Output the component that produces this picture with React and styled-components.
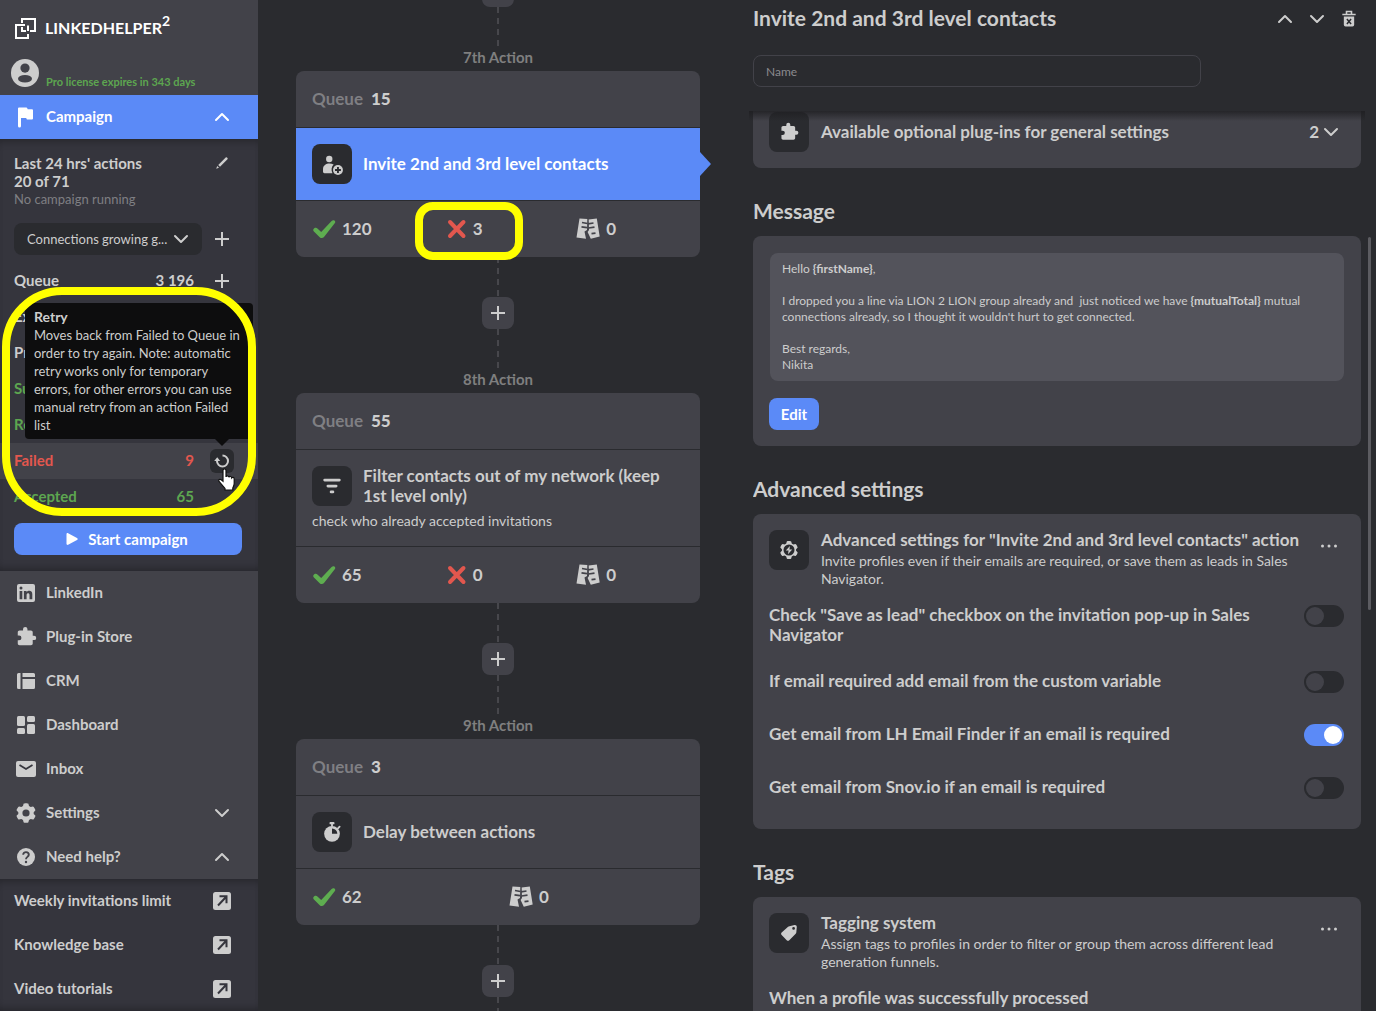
import React from 'react';
import styled, { createGlobalStyle, css } from 'styled-components';

const campaignRows = [
    { label: 'Excluded' },
    { label: 'Processed' },
    { label: 'Successful', tone: 'green' },
    { label: 'Replied', tone: 'green' },
    { label: 'Failed', value: '9', tone: 'red', retry: true },
    { label: 'Accepted', value: '65', tone: 'green' },
];

const helpLinks = ['Weekly invitations limit', 'Knowledge base', 'Video tutorials'];

const emailSettings = [
    { id: 'lead', label: 'Check "Save as lead" checkbox on the invitation pop-up in Sales Navigator' },
    { id: 'custom', label: 'If email required add email from the custom variable' },
    { id: 'finder', label: 'Get email from LH Email Finder if an email is required', on: true },
    { id: 'snov', label: 'Get email from Snov.io if an email is required' },
];

/* icons */

const Svg = ({ size = 24, children, ...rest }) => (
    <svg width={size} height={size} viewBox="0 0 24 24" fill="currentColor" aria-hidden="true" {...rest}>
        {children}
    </svg>
);

const Chevron = ({ up }) => (
    <Svg>
        <path d={up ? 'M6 15l6-6 6 6' : 'M6 9l6 6 6-6'} fill="none" stroke="currentColor" strokeWidth="2" strokeLinecap="round" strokeLinejoin="round" />
    </Svg>
);

const Plus = () => (
    <Svg>
        <path d="M12 5v14M5 12h14" fill="none" stroke="currentColor" strokeWidth="2" />
    </Svg>
);

const LogoIcon = () => (
    <Svg fill="none" stroke="currentColor" strokeWidth="2">
        <path d="M9 7V3h13v12h-5M9 11v4h4" />
        <path d="M12 9H3v13h12v-4M15 15V9.500" />
    </Svg>
);

const FlagIcon = () => (
    <Svg>
        <path d="M4 3.500a1 1 0 0 1 1-1h7.200c.6 0 1 .3 1.200.9l.3.800H18a1 1 0 0 1 1 1V13.600a1 1 0 0 1-1 1h-4.500a1 1 0 0 1-.9-.6l-.4-.900H7V21a1.500 1.500 0 0 1-3 0z" />
    </Svg>
);

const LinkedInIcon = () => (
    <Svg>
        <path fillRule="evenodd" d="M5 3h14a2 2 0 0 1 2 2v14a2 2 0 0 1-2 2H5a2 2 0 0 1-2-2V5a2 2 0 0 1 2-2zm.6 7v8.300h2.700V10zM7 5.600a1.500 1.500 0 1 0 0 3 1.500 1.500 0 0 0 0-3zM9.900 10v8.300h2.700v-4.500c0-2 2.900-2.200 2.900 0v4.500h2.800v-5.200c0-4-4.200-3.900-5.700-1.900V10z" />
    </Svg>
);

const PuzzleIcon = () => (
    <Svg>
        <path d="M20.500 11H19V7c0-1.100-.9-2-2-2h-4V3.500a2.500 2.500 0 0 0-5 0V5H4c-1.100 0-2 .9-2 2v3.800h1.500a2.700 2.700 0 0 1 0 5.400H2V20c0 1.100.9 2 2 2h13c1.100 0 2-.9 2-2v-4h1.500a2.500 2.500 0 0 0 0-5z" transform="translate(2 1) scale(.88)" />
    </Svg>
);

const CrmIcon = () => (
    <Svg>
        <path d="M4.500 4H6.500v16h-2A1.500 1.500 0 0 1 3 18.500v-13A1.500 1.500 0 0 1 4.500 4zM8.500 4h11A1.500 1.500 0 0 1 21 5.500V8H8.500zM8.500 10H21v8.500a1.500 1.500 0 0 1-1.500 1.500h-11z" />
    </Svg>
);

const DashboardIcon = () => (
    <Svg>
        <rect x="3" y="3" width="8" height="10" rx="1.500" />
        <rect x="13" y="3" width="8" height="6" rx="1.500" />
        <rect x="3" y="15" width="8" height="6" rx="1.500" />
        <rect x="13" y="11" width="8" height="10" rx="1.500" />
    </Svg>
);

const MailIcon = () => (
    <Svg>
        <rect x="2" y="4" width="20" height="16" rx="2" />
        <path d="M5.500 8l6.500 4 6.500-4" fill="none" stroke="#35353d" strokeWidth="1.800" />
    </Svg>
);

const gearPath = 'M9.600 2.800c.2-.8 4.600-.8 4.800 0l.6 2.200 1.700 1 2.200-.600c.8-.2 3 3.600 2.400 4.200L19.700 11.200v1.700l1.600 1.500c.6.6-1.600 4.400-2.400 4.200l-2.200-.6-1.700 1-.6 2.200c-.2.800-4.600.8-4.800 0L9 19l-1.700-1-2.200.6c-.8.200-3-3.600-2.400-4.200l1.600-1.500v-1.700L2.700 9.600C2.100 9 4.300 5.200 5.100 5.400l2.200.6L9 5z';

const GearIcon = () => (
    <Svg>
        <path d={gearPath} />
        <circle cx="12" cy="12" r="3.600" fill="#424249" />
    </Svg>
);

const BoltGearIcon = () => (
    <Svg>
        <path d={gearPath} />
        <circle cx="12" cy="12" r="6" fill="#2a2b2f" />
        <path d="M13 7.500l-4.500 5h3l-.6 4 4.600-5h-3z" />
    </Svg>
);

const HelpIcon = () => (
    <Svg>
        <circle cx="12" cy="12" r="9" />
        <path d="M9.200 9.800c0-3.600 5.600-3.500 5.600 0 0 2-2.800 2.200-2.800 4.400" fill="none" stroke="#424249" strokeWidth="1.900" />
        <circle cx="12" cy="17" r="1.200" fill="#424249" />
    </Svg>
);

const ExternalIcon = () => (
    <Svg>
        <rect x="3" y="3" width="18" height="18" rx="2.500" />
        <path d="M8 16.500l8-8.500M9.500 7.300h7v7" fill="none" stroke="#35353d" strokeWidth="2" />
    </Svg>
);

const PencilIcon = () => (
    <Svg>
        <path d="M6.200 17.800l1-2.800 1.800 1.800zM8.200 14L15.700 6.500c.9-.9 2.700.9 1.800 1.800L10 15.800z" />
    </Svg>
);

const AvatarIcon = () => (
    <Svg size={30}>
        <circle cx="12" cy="12" r="11.200" />
        <circle cx="12" cy="8" r="3.700" fill="#424249" />
        <ellipse cx="12" cy="16.600" rx="5.600" ry="3" fill="#424249" />
    </Svg>
);

const RetryIcon = () => (
    <Svg>
        <path d="M12.500 6.500A5.500 5.500 0 1 1 7 12v-1" fill="none" stroke="currentColor" strokeWidth="2" />
        <path d="M4.200 12l3-3.800 3 3.800z" />
    </Svg>
);

const PlayIcon = () => (
    <Svg>
        <path d="M6.500 7.200c0-1 .8-1.400 1.600-1l8.900 4.700c.9.500.9 1.700 0 2.200l-8.900 4.700c-.8.400-1.600 0-1.600-1z" />
    </Svg>
);

const PersonPlusIcon = () => (
    <Svg>
        <circle cx="9" cy="6.500" r="3.500" />
        <path d="M2.200 20.500V17.500c0-4 3.400-6 7-6 1.700 0 3.300.4 4.600 1.100-2.400 2.300-3 6-1.300 9.400H3.700a1.500 1.500 0 0 1-1.500-1.500z" />
        <circle cx="18.500" cy="18.500" r="5.400" />
        <path d="M18.500 15.300v6.400M15.300 18.500h6.400" stroke="#2a2b2f" strokeWidth="2" />
    </Svg>
);

const FilterIcon = () => (
    <Svg>
        <path d="M4 5.500h16M7.500 12h9M11 18.500h2" fill="none" stroke="currentColor" strokeWidth="3" strokeLinecap="round" />
    </Svg>
);

const TimerIcon = () => (
    <Svg>
        <rect x="9.300" y="1" width="5.400" height="2.600" rx="1" />
        <rect x="11" y="3" width="2" height="3" />
        <circle cx="12" cy="14" r="8.600" />
        <path d="M18.500 8l1.800-1.800" stroke="currentColor" strokeWidth="2" strokeLinecap="round" />
        <path d="M12 14V8.200a5.800 5.800 0 0 1 5.800 5.800z" fill="#2a2b2f" />
    </Svg>
);

const TagIcon = () => (
    <Svg>
        <path fillRule="evenodd" d="M12.500 4.500L18 3.300c1.400-.3 2.600.8 2.500 2.200L20 11.300c0 .6-.3 1.100-.7 1.500l-7 7c-.8.800-2 .8-2.800 0L4 14.300c-.8-.8-.8-2 0-2.800l7-6.300c.4-.4.900-.6 1.500-.7zM17 5.500a1.500 1.500 0 1 0 0 3 1.500 1.500 0 0 0 0-3z" />
    </Svg>
);

const CheckIcon = () => (
    <Svg>
        <path d="M1.300 12.600c.8-2 3-2.300 4.400-.9l3.500 3.400L19.600 4c1.700-1.700 4.700-.2 3.300 2L12 20c-1.100 1.300-3 1.400-4.300.2L1.900 14.600c-.6-.6-.8-1.300-.6-2z" fill="#5ead50" />
    </Svg>
);

const CrossIcon = () => (
    <Svg size={20} viewBox="0 0 20 20">
        <path d="M3 3l13.500 14M16.500 3L3 17" fill="none" stroke="#e2574e" strokeWidth="4" strokeLinecap="round" />
    </Svg>
);

const TornIcon = () => (
    <Svg>
        <path d="M3.500 1.500l7.800.5-.3 11-2.500 1.500 1.500 7.300-9.500-1.300z" />
        <path d="M12.700 2.500l8.100-1 2.900 18-8.900 2.200-3.200-6.700 1.400-2z" />
        <path d="M6 5.500l5.500 1M5.500 9.800l5.500.9M12 6.800l5.500-.8M12.500 11l6-.8M15.500 16.700l4-.5" fill="none" stroke="#424249" strokeWidth="1.700" />
    </Svg>
);

const TrashIcon = () => (
    <Svg size={20}>
        <path d="M4 6.500h16M9 6V3h6v3" fill="none" stroke="currentColor" strokeWidth="1.900" />
        <path d="M5.800 9h12.400V19a2 2 0 0 1-2 2H7.800a2 2 0 0 1-2-2z" />
        <path d="M9.500 12l5 6M14.500 12l-5 6" stroke="#2a2b2f" strokeWidth="1.800" />
    </Svg>
);

const DotsIcon = () => (
    <Svg>
        <circle cx="5.500" cy="12" r="1.500" />
        <circle cx="12" cy="12" r="1.500" />
        <circle cx="18.500" cy="12" r="1.500" />
    </Svg>
);

const HandCursor = () => (
    <svg width="20" height="24" viewBox="0 0 20 24" aria-hidden="true">
        <path d="M6 2.500c0-2 3-2 3 0V9c.3-1.500 2.800-1.300 2.900.3.500-1.300 2.600-1 2.800.6.700-1 2.500-.6 2.500 1v4.600c0 2-.9 3-1.400 4.500V22H8v-1.600L2 13.500c-1-1.600.8-2.900 2.200-1.700L6 13.300z" fill="#fff" stroke="#111" strokeWidth="1.200" />
    </svg>
);

const navItems = [
    { label: 'LinkedIn', icon: <LinkedInIcon /> },
    { label: 'Plug-in Store', icon: <PuzzleIcon /> },
    { label: 'CRM', icon: <CrmIcon /> },
    { label: 'Dashboard', icon: <DashboardIcon /> },
    { label: 'Inbox', icon: <MailIcon /> },
    { label: 'Settings', icon: <GearIcon />, chevron: 'down' },
    { label: 'Need help?', icon: <HelpIcon />, chevron: 'up' },
];

const ActionCard = ({ step, queue, icon, title, note, active, done, failed, lost, marked }) => (
    <>
        <Connector />
        <StepLabel>{step} Action</StepLabel>
        <Card>
            <CardQueue>Queue <b>{queue}</b></CardQueue>
            <CardBody $active={active}>
                <CardTitle>
                    <IconBox>{icon}</IconBox>
                    <h3>{title}</h3>
                </CardTitle>
                {note && <p>{note}</p>}
            </CardBody>
            <CardStats>
                <Stat><CheckIcon />{done}</Stat>
                {failed !== undefined && (
                    <Stat>
                        <CrossIcon />{failed}
                        {marked && <StatMark />}
                    </Stat>
                )}
                <Stat $tight><TornIcon />{lost}</Stat>
            </CardStats>
        </Card>
        <Connector />
        <AddButton aria-label="Add action"><Plus /></AddButton>
    </>
);

const App = () => {
    return (
        <>
            <GlobalStyle />
            <Page>
                <Sidebar>
                    <Brand>
                        <LogoIcon />
                        <span>LINKEDHELPER<sup>2</sup></span>
                    </Brand>
                    <License>
                        <AvatarIcon />
                        <span>Pro license expires in 343 days</span>
                    </License>
                    <NavItem href="#campaign" $active>
                        <FlagIcon />
                        <span>Campaign</span>
                        <Chevron up />
                    </NavItem>

                    <Panel>
                        <Summary>
                            <div>
                                <strong>Last 24 hrs' actions</strong>
                                <strong>20 of 71</strong>
                                <small>No campaign running</small>
                            </div>
                            <IconButton aria-label="Edit limit"><PencilIcon /></IconButton>
                        </Summary>
                        <Picker>
                            <SelectWrap>
                                <select aria-label="Campaign name">
                                    <option>Connections growing g...</option>
                                </select>
                                <Chevron />
                            </SelectWrap>
                            <IconButton aria-label="Add campaign"><Plus /></IconButton>
                        </Picker>
                        <Counter>
                            <span>Queue</span>
                            <span>3 196</span>
                            <IconButton aria-label="Add to queue"><Plus /></IconButton>
                        </Counter>
                        <CounterGroup>
                            {campaignRows.map(row => (
                                <Counter key={row.label} $tone={row.tone} $hovered={row.retry}>
                                    <span>{row.label}</span>
                                    <span>{row.value}</span>
                                    {row.retry && (
                                        <RetryButton aria-label="Retry">
                                            <RetryIcon />
                                            <Pointer><HandCursor /></Pointer>
                                        </RetryButton>
                                    )}
                                    {row.retry && (
                                        <Tooltip role="tooltip">
                                            <b>Retry</b>
                                            <p>Moves back from Failed to Queue in order to try again. Note: automatic retry works only for temporary errors, for other errors you can use manual retry from an action Failed list</p>
                                        </Tooltip>
                                    )}
                                </Counter>
                            ))}
                            <GroupMark />
                        </CounterGroup>
                        <StartButton><PlayIcon />Start campaign</StartButton>
                    </Panel>

                    <nav>
                        {navItems.map(item => (
                            <NavItem key={item.label} href="#">
                                {item.icon}
                                <span>{item.label}</span>
                                {item.chevron && <Chevron up={item.chevron === 'up'} />}
                            </NavItem>
                        ))}
                    </nav>

                    <HelpPanel>
                        {helpLinks.map(link => (
                            <NavItem key={link} href="#">
                                <span>{link}</span>
                                <ExternalIcon />
                            </NavItem>
                        ))}
                    </HelpPanel>
                </Sidebar>

                <Workflow>
                    <AddButton aria-label="Add action"><Plus /></AddButton>
                    <ActionCard step="7th" queue="15" icon={<PersonPlusIcon />} title="Invite 2nd and 3rd level contacts" active done="120" failed="3" lost="0" marked />
                    <ActionCard step="8th" queue="55" icon={<FilterIcon />} title="Filter contacts out of my network (keep 1st level only)" note="check who already accepted invitations" done="65" failed="0" lost="0" />
                    <ActionCard step="9th" queue="3" icon={<TimerIcon />} title="Delay between actions" done="62" lost="0" />
                    <Connector />
                </Workflow>

                <Details>
                    <DetailsHead>
                        <TitleBar>
                            <h1>Invite 2nd and 3rd level contacts</h1>
                            <IconButton aria-label="Move up"><Chevron up /></IconButton>
                            <IconButton aria-label="Move down"><Chevron /></IconButton>
                            <IconButton aria-label="Delete"><TrashIcon /></IconButton>
                        </TitleBar>
                        <NameInput aria-label="Name" placeholder="Name" />
                    </DetailsHead>

                    <DetailsBody>
                        <Section>
                            <Plugins>
                                <IconBox><PuzzleIcon /></IconBox>
                                <h3>Available optional plug-ins for general settings</h3>
                                <MoreButton>2<Chevron /></MoreButton>
                            </Plugins>
                        </Section>

                        <SectionTitle>Message</SectionTitle>
                        <Section>
                            <Message>
                                <p>Hello <b>{'{firstName}'}</b>,</p>
                                <p>
                                    {'I dropped you a line via LION 2 LION group already and  just noticed we have '}
                                    <b>{'{mutualTotal}'}</b>
                                    {" mutual connections already, so I thought it wouldn't hurt to get connected."}
                                </p>
                                <p>{'Best regards,\nNikita'}</p>
                            </Message>
                            <EditButton>Edit</EditButton>
                        </Section>

                        <SectionTitle>Advanced settings</SectionTitle>
                        <Section>
                            <SectionIntro>
                                <IconBox><BoltGearIcon /></IconBox>
                                <div>
                                    <h3>Advanced settings for "Invite 2nd and 3rd level contacts" action</h3>
                                    <p>Invite profiles even if their emails are required, or save them as leads in Sales Navigator.</p>
                                </div>
                                <IconButton aria-label="More"><DotsIcon /></IconButton>
                            </SectionIntro>
                            <Options>
                                {emailSettings.map(item => (
                                    <Option key={item.id} htmlFor={item.id}>
                                        <span>{item.label}</span>
                                        <Toggle type="checkbox" id={item.id} defaultChecked={item.on} />
                                    </Option>
                                ))}
                            </Options>
                        </Section>

                        <SectionTitle>Tags</SectionTitle>
                        <Section>
                            <SectionIntro>
                                <IconBox><TagIcon /></IconBox>
                                <div>
                                    <h3>Tagging system</h3>
                                    <p>Assign tags to profiles in order to filter or group them across different lead generation funnels.</p>
                                </div>
                                <IconButton aria-label="More"><DotsIcon /></IconButton>
                            </SectionIntro>
                            <h3>When a profile was successfully processed</h3>
                        </Section>
                    </DetailsBody>
                    <ScrollThumb />
                </Details>
            </Page>
        </>
    );
};

export default App;



const GlobalStyle = createGlobalStyle`
    * {
        box-sizing: border-box;
    }
    body {
        margin: 0;
        background: #fff;
        color: #cdcdcd;
        font: 14px/18px Lato, "Open Sans", sans-serif;
    }
    h1, h2, h3, p {
        margin: 0;
    }
    h3 {
        font-size: 17px;
        line-height: 20px;
        font-weight: 700;
    }
    button, input, select {
        font: inherit;
        color: inherit;
        margin: 0;
    }
    svg {
        display: block;
        flex: none;
    }
`;

const tones = { plain: '#cdcdcd', green: '#5da650', red: '#e2574e' };

const Page = styled.div`
    display: flex;
    height: 100vh;
    margin-right: 11px;
    overflow: hidden;
    background: #2a2b2f;
`;

const Sidebar = styled.aside`
    flex: 0 0 258px;
    background: #424249;
`;

const Brand = styled.div`
    display: flex;
    align-items: center;
    gap: 8px;
    height: 56px;
    padding-left: 13px;
    color: #fff;
    font-size: 16px;
    font-weight: 700;

    sup{
        font-size: 14px;
        line-height: 0;
        vertical-align: 8px;
    }
`;

const License = styled.div`
    display: flex;
    align-items: center;
    gap: 6px;
    height: 39px;
    padding: 0 0 5px 10px;
    color: #cdcdcd;

    span{
        padding-top: 17px;
        color: #5da650;
        font-size: 11px;
        font-weight: 700;
    }
`;

const NavItem = styled.a`
    display: flex;
    align-items: center;
    gap: 8px;
    height: 44px;
    padding: 0 24px 0 14px;
    color: ${p => (p.$active ? '#fff' : '#cdcdcd')};
    background: ${p => (p.$active ? '#5b8af7' : 'transparent')};
    font-size: 15px;
    font-weight: 700;
    text-decoration: none;

    span{
        flex: 1;
        padding-bottom: 2px;
    }
`;

const sunken = css`
    background: #35353d;
    box-shadow: inset 0 8px 8px -6px rgba(0, 0, 0, .3), inset 0 -8px 8px -6px rgba(0, 0, 0, .3);
`;

const Panel = styled.div`
    ${sunken}
    padding: 15px 0 16px;
`;

const HelpPanel = styled.div`
    ${sunken}
`;

const IconButton = styled.button`
    display: flex;
    align-items: center;
    justify-content: center;
    width: 24px;
    height: 24px;
    padding: 0;
    border: 0;
    background: none;
    cursor: pointer;
`;

const Summary = styled.div`
    display: flex;
    justify-content: space-between;
    padding: 0 24px 0 14px;

    button{
        height: 18px;
    }
    strong, small{
        display: block;
        font-size: 15px;
    }
    small{
        color: #7f7f83;
        font-size: 13px;
    }
`;

const Picker = styled.div`
    display: flex;
    align-items: center;
    justify-content: space-between;
    margin: 15px 0 8px;
    padding: 0 24px 0 14px;
`;

const SelectWrap = styled.div`
    position: relative;
    width: 188px;

    select{
        display: block;
        width: 100%;
        height: 32px;
        padding: 0 32px 0 13px;
        border: 0;
        border-radius: 8px;
        background: #2a2b2f;
        font-size: 13px;
        appearance: none;
    }
    svg{
        position: absolute;
        top: 4px;
        right: 9px;
        pointer-events: none;
    }
`;

const CounterGroup = styled.div`
    position: relative;
    margin-bottom: 8px;
`;

const Counter = styled.div`
    position: relative;
    display: grid;
    grid-template-columns: 90px 90px 24px;
    align-items: center;
    justify-items: start;
    height: 36px;
    padding-left: 14px;
    color: ${p => tones[p.$tone || 'plain']};
    background: ${p => (p.$hovered ? '#424249' : 'transparent')};
    font-size: 15px;
    font-weight: 700;
    z-index: ${p => (p.$hovered ? 1 : 0)};

    > span{
        padding-bottom: 2px;
    }
    > span:nth-child(2){
        justify-self: end;
    }
    button{
        margin-left: 16px;
    }
`;

const RetryButton = styled(IconButton)`
    position: relative;
    border-radius: 6px;
    background: #2a2b2f;
    color: #cdcdcd;
`;

const Pointer = styled.span`
    position: absolute;
    top: 19px;
    left: 7px;
`;

const Tooltip = styled.div`
    position: absolute;
    left: 25px;
    bottom: 40px;
    width: 228px;
    padding: 5px 9px;
    border-radius: 4px;
    background: #0d0d0e;
    color: #cdcdcd;
    font-size: 13px;
    font-weight: 400;

    b{
        display: block;
        font-size: 14px;
    }
    &::after{
        content: '';
        position: absolute;
        top: 100%;
        left: 190px;
        border: 7px solid transparent;
        border-top-color: #0d0d0e;
        border-bottom: 0;
    }
`;

const Mark = styled.div`
    position: absolute;
    border: 8px solid #ff0;
    pointer-events: none;
    z-index: 2;
`;

const GroupMark = styled(Mark)`
    inset: -12px 2px -1px 2px;
    border-radius: 60px;
`;

const StatMark = styled(Mark)`
    inset: 1px 42px -3px -16px;
    border-radius: 18px;
`;

const StartButton = styled.button`
    display: flex;
    align-items: center;
    justify-content: center;
    gap: 4px;
    width: 228px;
    height: 32px;
    margin-left: 14px;
    padding: 0 8px 0 0;
    border: 0;
    border-radius: 8px;
    background: #5b8af7;
    color: #fff;
    font-size: 15px;
    font-weight: 700;
`;

const Workflow = styled.main`
    flex: 0 0 480px;
    display: flex;
    flex-direction: column;
    align-items: center;
    margin-top: -25px;
    padding: 0 38px;
`;

const Connector = styled.div`
    flex: none;
    width: 2px;
    height: 40px;
    background: repeating-linear-gradient(#47474c 0 6px, transparent 6px 11px);
`;

const AddButton = styled.button`
    display: flex;
    flex: none;
    align-items: center;
    justify-content: center;
    width: 32px;
    height: 32px;
    padding: 0;
    border: 0;
    border-radius: 8px;
    background: #424249;
`;

const StepLabel = styled.div`
    flex: none;
    height: 24px;
    color: #7f7f7f;
    font-size: 15px;
    line-height: 20px;
    font-weight: 700;
`;

const Card = styled.article`
    flex: none;
    width: 100%;
    border-radius: 8px;
    background: #424249;
    font-size: 17px;
    line-height: 20px;
`;

const CardQueue = styled.div`
    display: flex;
    align-items: center;
    gap: 8px;
    height: 56px;
    padding: 0 16px;
    color: #7f7f83;
    font-weight: 700;

    b{
        color: #cdcdcd;
    }
`;

const CardBody = styled.div`
    position: relative;
    padding: 16px;
    border: solid #2a2b2f;
    border-width: 1px 0;

    p{
        padding: 6px 0 0;
        font-size: 14px;
        line-height: 18px;
    }

    ${p => !p.$active && css`
        &:has(p){
            padding-bottom: 16px;
        }
    `}

    ${p => p.$active && css`
        background: #5b8af7;
        color: #fff;

        &::after{
            content: '';
            position: absolute;
            top: 24px;
            left: 100%;
            width: 11px;
            height: 24px;
            background: #5b8af7;
            clip-path: polygon(0 0, 100% 50%, 0 100%);
        }
    `}
`;

const IconBox = styled.span`
    display: flex;
    flex: none;
    align-items: center;
    justify-content: center;
    width: 40px;
    height: 40px;
    border-radius: 8px;
    background: #2a2b2f;
    color: #cdcdcd;

    svg{
        width: 22px;
        height: 22px;
    }
`;

const CardTitle = styled.div`
    display: flex;
    align-items: center;
    gap: 11px;
`;

const CardStats = styled.div`
    display: grid;
    grid-auto-flow: column;
    grid-auto-columns: 1fr;
    height: 56px;
    font-weight: 700;
`;

const Stat = styled.div`
    position: relative;
    display: flex;
    align-items: center;
    gap: 6px;
    padding-left: ${p => (p.$tight ? 11 : 16)}px;
`;

const Details = styled.section`
    position: relative;
    flex: 1;
    min-width: 0;
    display: flex;
    flex-direction: column;
    padding: 0 15px;
`;

const DetailsHead = styled.header`
    position: relative;
    z-index: 1;
    flex: none;
    height: 111px;
    background: #2a2b2f;

    &::after{
        content: '';
        position: absolute;
        top: 100%;
        left: -4px;
        right: -4px;
        height: 10px;
        background: linear-gradient(rgba(30, 30, 33, .8), rgba(30, 30, 33, 0));
    }
`;

const TitleBar = styled.div`
    display: flex;
    align-items: center;
    gap: 8px;
    height: 55px;
    padding-bottom: 17px;

    h1{
        flex: 1;
        padding-bottom: 2px;
        font-size: 21px;
        line-height: 24px;
        font-weight: 700;
    }
`;

const NameInput = styled.input`
    display: block;
    width: 448px;
    max-width: 100%;
    height: 32px;
    padding: 0 12px;
    border: 1px solid #424249;
    border-radius: 8px;
    background: transparent;
    font-size: 12px;

    &::placeholder{
        color: #8a8a8e;
    }
`;

const DetailsBody = styled.div`
    flex: 1;
    min-height: 0;
    margin-top: -15px;
    overflow: hidden;
`;

const Section = styled.section`
    padding: 16px;
    border-radius: 8px;
    background: #424249;
`;

const SectionTitle = styled.h2`
    padding: 28px 0 10px;
    font-size: 21px;
    line-height: 30px;
    font-weight: 700;
`;

const Plugins = styled.div`
    display: flex;
    align-items: center;
    gap: 12px;

    h3{
        flex: 1;
    }
`;

const MoreButton = styled.button`
    display: flex;
    align-items: center;
    padding: 0 2px 0 0;
    border: 0;
    background: none;
    font-size: 17px;
    font-weight: 700;
`;

const Message = styled.div`
    display: flex;
    flex-direction: column;
    gap: 16px;
    margin: 1px 1px 17px;
    padding: 8px 12px;
    border-radius: 8px;
    background: #53535b;
    font-size: 12px;
    line-height: 16px;
    white-space: pre-wrap;
`;

const EditButton = styled.button`
    display: block;
    width: 50px;
    height: 32px;
    padding: 0;
    border: 0;
    border-radius: 8px;
    background: #5b8af7;
    color: #fff;
    font-size: 15px;
    font-weight: 700;
`;

const SectionIntro = styled.div`
    display: flex;
    gap: 12px;
    padding-bottom: 17px;

    div{
        flex: 1;
    }
    p{
        padding-top: 2px;
    }
    button{
        margin: 4px 4px 0 -8px;
    }
`;

const Options = styled.div`
    display: flex;
    flex-direction: column;
    gap: 26px;
    padding-bottom: 9px;
`;

const Option = styled.label`
    display: flex;
    align-items: flex-start;
    justify-content: space-between;
    gap: 48px;
    min-height: 27px;
    padding-right: 1px;
    font-size: 17px;
    line-height: 20px;
    font-weight: 700;
`;

const Toggle = styled.input`
    flex: none;
    width: 40px;
    height: 22px;
    padding: 2px;
    border-radius: 11px;
    background: #2a2b2f;
    appearance: none;

    &::before{
        content: '';
        display: block;
        width: 18px;
        height: 18px;
        border-radius: 50%;
        background: #424249;
    }
    &:checked{
        background: #5b8af7;
    }
    &:checked::before{
        margin-left: 18px;
        background: #fff;
    }
`;

const ScrollThumb = styled.div`
    position: absolute;
    top: 237px;
    right: 5px;
    width: 3px;
    height: 373px;
    border-radius: 2px;
    background: #5c5c61;
`;
